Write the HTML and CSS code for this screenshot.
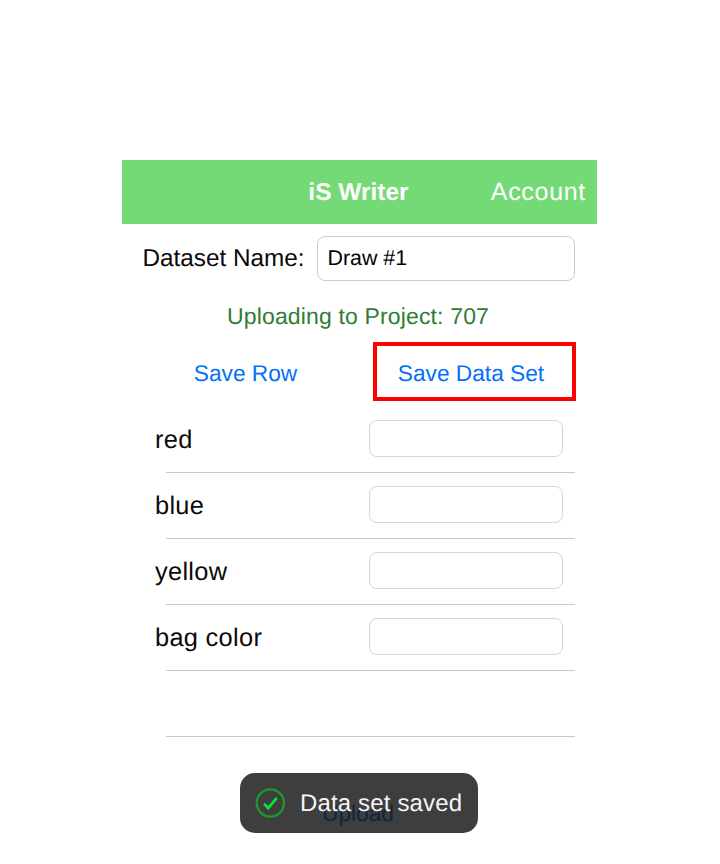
FILE: index.html
```html
<!DOCTYPE html>
<html lang="en">
<head>
<meta charset="utf-8">
<title>iS Writer</title>
<link rel="stylesheet" href="styles.css">
</head>
<body>
<main class="app">
  <header class="navbar">
    <h1 class="title">iS Writer</h1>
    <a class="account">Account</a>
  </header>
  <div class="name-row">
    <label class="name-label" for="dataset">Dataset Name:</label>
    <input class="name-input" id="dataset" type="text" value="Draw #1">
  </div>
  <p class="status">Uploading to Project: 707</p>
  <div class="actions">
    <button class="action save-row">Save Row</button>
    <button class="action save-set">Save Data Set</button>
  </div>
  <ul class="fields">
    <li class="field"><label class="field-label" for="f1">red</label><input class="field-input" id="f1" type="text"></li>
    <li class="field"><label class="field-label" for="f2">blue</label><input class="field-input" id="f2" type="text"></li>
    <li class="field"><label class="field-label" for="f3">yellow</label><input class="field-input" id="f3" type="text"></li>
    <li class="field"><label class="field-label" for="f4">bag color</label><input class="field-input" id="f4" type="text"></li>
    <li class="field"></li>
  </ul>
  <footer class="footer">
    <button class="action upload">Upload</button>
    <div class="toast" role="status">
      <svg class="check" viewBox="0 0 32 32" width="32" height="32">
        <circle cx="16.3" cy="16" r="13.6" fill="none" stroke="#1c9a2c" stroke-width="2.2"/>
        <path d="M10 16.6 L14.2 21.2 L22.8 10.8" fill="none" stroke="#05e636" stroke-width="2.7"/>
      </svg>
      <span class="toast-text">Data set saved</span>
    </div>
  </footer>
</main>
</body>
</html>
```
FILE: styles.css
```css
* {
  box-sizing: border-box;
}

body {
  margin: 0;
  background: #fff;
  color: #0a0a0a;
  font-family: "Liberation Sans", Arial, sans-serif;
  text-rendering: geometricPrecision;
}

.app {
  width: 475px;
  margin: 160px 0 0 122px;
}

.navbar {
  display: grid;
  grid-template-columns: 1fr auto 1fr;
  align-items: center;
  height: 64px;
  padding-right: 11px;
  background: #74da76;
  color: #fff;
}

.title {
  grid-column: 2;
  margin: 1px 0 0 9px;
  font-size: 24.5px;
  line-height: 30px;
}

.account {
  justify-self: end;
  margin-bottom: 1px;
  font-size: 25px;
  line-height: 30px;
  letter-spacing: 0.7px;
}

.name-row {
  display: flex;
  align-items: center;
  justify-content: space-between;
  height: 45px;
  margin: 12px 22px 0 20px;
}

.name-label {
  padding-left: 0.5px;
  font-size: 24.3px;
  line-height: 30px;
}

.name-input {
  width: 258px;
  height: 45px;
  padding: 0 9.5px 1px;
  border: 1px solid #ccc;
  border-radius: 8px;
  background: #fff;
  color: #000;
  font: 21.4px "Liberation Sans", Arial, sans-serif;
  text-rendering: inherit;
}

.status {
  margin: 20px 0 0;
  padding-right: 3px;
  color: #2e7d32;
  font-size: 23px;
  line-height: 30px;
  letter-spacing: 0.15px;
  text-align: center;
}

.actions {
  display: flex;
  justify-content: space-between;
  height: 59px;
  margin: 11px 21px 0 51px;
}

.action {
  padding: 0;
  border: 0;
  background: none;
  color: #0470f8;
  font: 22.7px "Liberation Sans", Arial, sans-serif;
  text-rendering: inherit;
}

.save-row {
  width: 145px;
  padding-top: 3px;
}

.save-set {
  width: 203px;
  padding: 3px 7px 0 0;
  border: 4px solid #f00;
}

.fields {
  margin: 6px 22px 0 33px;
  padding: 0;
  list-style: none;
}

.field {
  display: flex;
  align-items: center;
  justify-content: space-between;
  height: 66px;
  padding-right: 12px;
  background: linear-gradient(#c8c7cc, #c8c7cc) 10.5px 100% / 100% 1px no-repeat;
}

.field-label {
  font-size: 25.4px;
  line-height: 30px;
  letter-spacing: 0.3px;
}

.field-input {
  width: 194px;
  height: 37px;
  margin-bottom: 3px;
  border: 1px solid #d6d6d6;
  border-radius: 8px;
  background: #fff;
}

.footer {
  position: relative;
  width: 238px;
  height: 60px;
  margin: 36px 0 0 118px;
}

.upload {
  display: block;
  width: 100%;
  height: 60px;
  padding: 21px 2px 0 0;
}

.toast {
  position: absolute;
  inset: 0;
  display: flex;
  align-items: center;
  gap: 14px;
  padding-left: 14px;
  border-radius: 15px;
  background: rgba(20, 20, 20, 0.82);
  color: #f4f4f4;
}

.toast-text {
  margin-top: 1px;
  font-size: 24px;
  line-height: 30px;
  letter-spacing: 0.15px;
}
```
